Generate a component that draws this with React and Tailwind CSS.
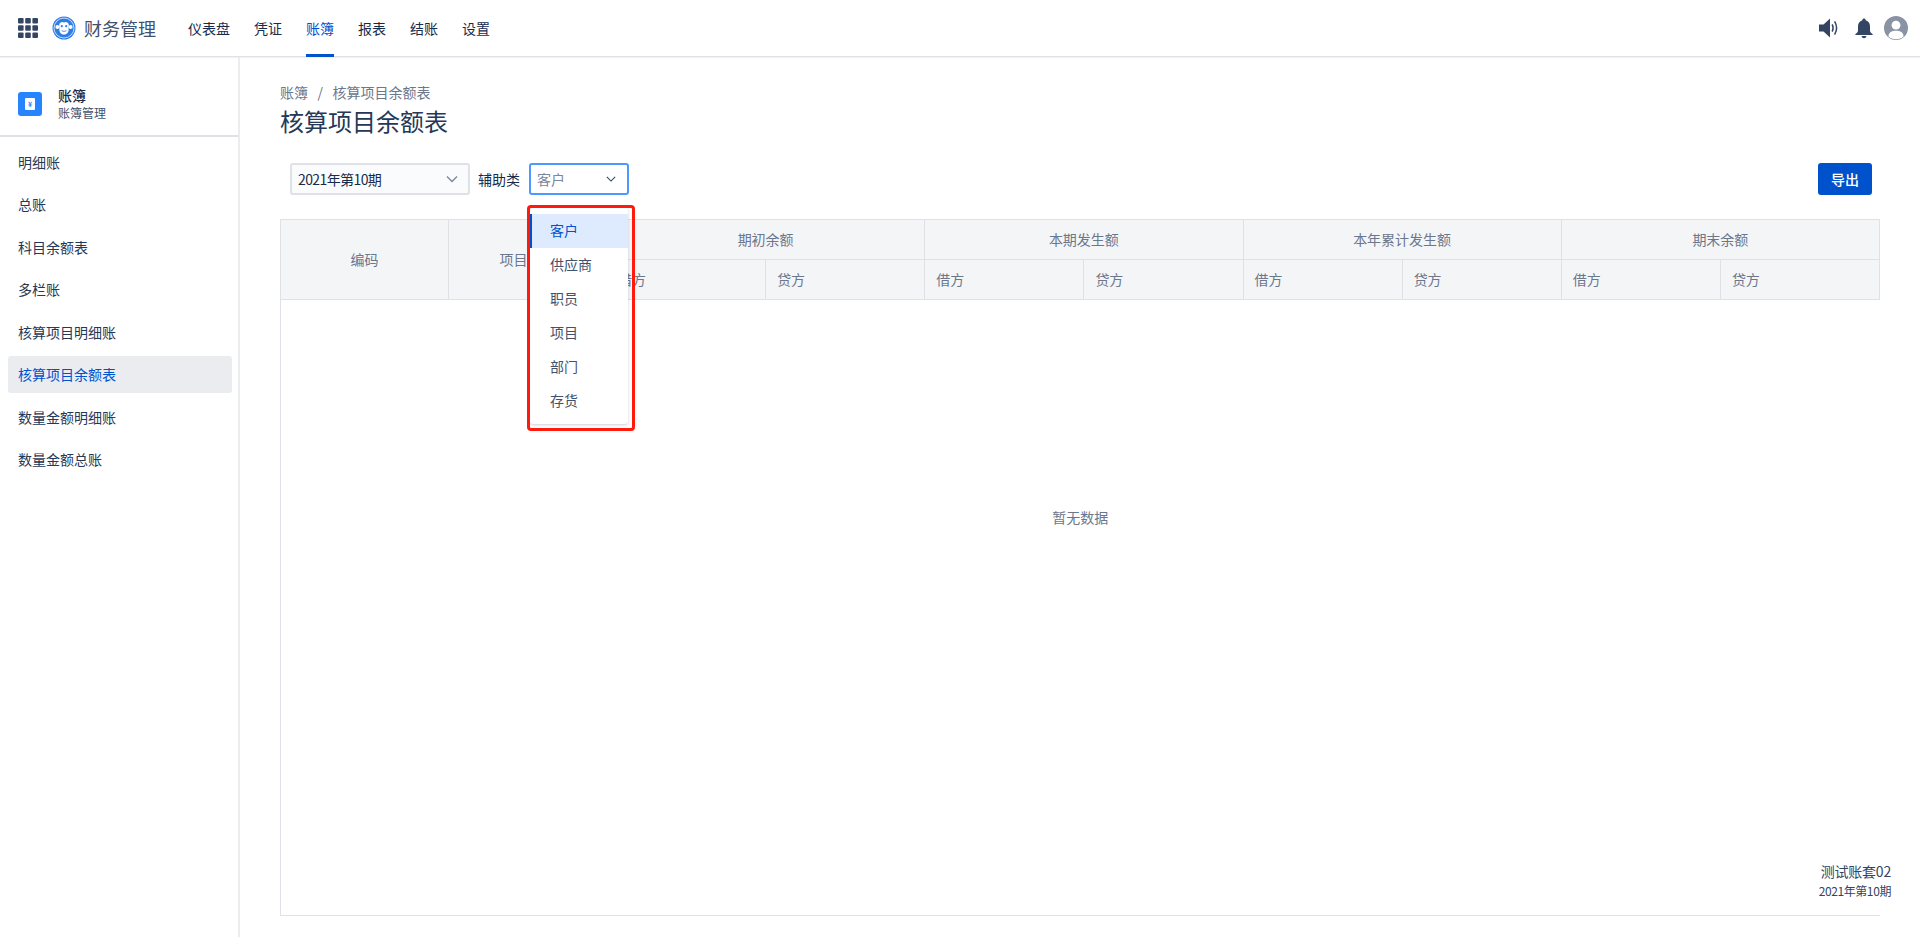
const NAV = ['仪表盘', '凭证', '账簿', '报表', '结账', '设置']
const SIDE = ['明细账', '总账', '科目余额表', '多栏账', '核算项目明细账', '核算项目余额表', '数量金额明细账', '数量金额总账']
const OPTIONS = ['客户', '供应商', '职员', '项目', '部门', '存货']
const GROUPS = ['期初余额', '本期发生额', '本年累计发生额', '期末余额']

function Chevron({ className }) {
  return (
    <svg viewBox="0 0 12 12" className={className} fill="none" stroke="currentColor" strokeWidth="1.3">
      <path d="M1 3.5 L6 8.5 L11 3.5" />
    </svg>
  )
}

function Logo() {
  return (
    <svg viewBox="0 0 24 24" className="w-[24px] h-[24px] shrink-0">
      <circle cx="12" cy="12" r="11.5" fill="#2f80e8" />
      <circle cx="12" cy="12" r="10" fill="none" stroke="#ffffff" strokeWidth="0.7" />
      <circle cx="12" cy="12" r="8.6" fill="#2f7de1" />
      <circle cx="5.4" cy="11" r="2" fill="#ffffff" />
      <circle cx="18.6" cy="11" r="2" fill="#ffffff" />
      <path d="M12 6.6 C13 5.6 16.6 5.8 16.8 9 C17 11 16.4 11.6 16.6 13 C17 16.6 14.4 18.6 12 18.6 C9.6 18.6 7 16.6 7.4 13 C7.6 11.6 7 11 7.2 9 C7.4 5.8 11 5.6 12 6.6 Z" fill="#ffffff" />
      <circle cx="9.8" cy="10.2" r="1.1" fill="#2f7de1" />
      <circle cx="14.2" cy="10.2" r="1.1" fill="#2f7de1" />
      <path d="M9.5 14.6 Q12 16.4 14.5 14.6" fill="none" stroke="#2f7de1" strokeWidth="0.8" />
    </svg>
  )
}

function Grid() {
  return (
    <svg viewBox="0 0 20 20" className="w-[20px] h-[20px]" fill="#344563">
      {[0, 7.2, 14.4].map(y => [0, 7.2, 14.4].map(x => (
        <rect key={`${x}-${y}`} x={x} y={y} width="5.6" height="5.6" rx="1" />
      )))}
    </svg>
  )
}

function Speaker() {
  return (
    <svg viewBox="0 0 20 20" className="w-[20px] h-[20px]">
      <path d="M0 6.5 H4.5 L11 0.5 V19.5 L4.5 13.5 H0 Z" fill="#344563" />
      <path d="M13.2 6.4 Q15 10 13.2 13.6" fill="none" stroke="#344563" strokeWidth="1.5" />
      <path d="M15.6 3.4 Q19.6 10 15.6 16.6" fill="none" stroke="#344563" strokeWidth="1.5" />
    </svg>
  )
}

function Bell() {
  return (
    <svg viewBox="0 0 24 24" className="w-[24px] h-[24px]" fill="#344563">
      <path d="M12 2.5 C13 2.5 13.6 3.2 13.6 4.2 C16.6 5 18 7.4 18 10.4 V14.4 C18 16 19 17 20.6 18 V19 H3.4 V18 C5 17 6 16 6 14.4 V10.4 C6 7.4 7.4 5 10.4 4.2 C10.4 3.2 11 2.5 12 2.5 Z" />
      <path d="M9.6 20 H14.4 C14.4 21.4 13.4 22.2 12 22.2 C10.6 22.2 9.6 21.4 9.6 20 Z" />
    </svg>
  )
}

function Avatar() {
  return (
    <svg viewBox="0 0 24 24" className="w-[24px] h-[24px]">
      <circle cx="12" cy="12" r="12" fill="#8993a4" />
      <circle cx="12" cy="9.2" r="4.4" fill="#ffffff" />
      <path d="M4.4 20.2 C4.8 16.4 7.6 14.8 12 14.8 C16.4 14.8 19.2 16.4 19.6 20.2 C17.6 22.4 15 23.2 12 23.2 C9 23.2 6.4 22.4 4.4 20.2 Z" fill="#ffffff" />
    </svg>
  )
}

function BookIcon() {
  return (
    <div className="w-[24px] h-[24px] rounded-[3px] bg-[#2684ff] flex items-center justify-center shrink-0">
      <div className="w-[10px] h-[12px] rounded-[1px] bg-white flex items-center justify-center text-[7px] leading-none font-bold text-[#2684ff]">¥</div>
    </div>
  )
}

export default function App() {
  return (
    <div className="h-[937px] flex flex-col overflow-hidden bg-white text-[#172b4d] text-[14px] font-['Noto_Sans_CJK_SC','Noto_Sans',sans-serif]">
      <header className="h-[57px] shrink-0 flex items-center border-b border-[#dfe1e6] shadow-[0_1px_1px_rgba(9,30,66,0.06)]">
        <div className="ml-[18px]"><Grid /></div>
        <div className="ml-[14px]"><Logo /></div>
        <span className="ml-[8px] text-[18px] text-[#42526e] leading-none">财务管理</span>
        <nav className="ml-[32px] flex gap-[24px] self-stretch">
          {NAV.map(n => (
            <a key={n} className={n === '账簿'
              ? 'h-[57px] flex items-center text-[#0052cc] border-b-[3px] border-[#0052cc] pt-[2px]'
              : 'h-[57px] flex items-center text-[#172b4d] border-b-[3px] border-transparent pt-[2px]'}>{n}</a>
          ))}
        </nav>
        <div className="ml-auto mr-[12px] flex items-center">
          <Speaker />
          <div className="ml-[13px]"><Bell /></div>
          <div className="ml-[8px]"><Avatar /></div>
        </div>
      </header>

      <div className="flex-1 flex min-h-0">
        <aside className="w-[240px] shrink-0 border-r-2 border-[#ebecf0]">
          <div className="h-[80px] border-b-2 border-[#dfe1e6] flex items-center pl-[18px] pt-[16px]">
            <BookIcon />
            <div className="ml-[16px]">
              <div className="font-medium text-[14px] leading-[18px] text-[#172b4d]">账簿</div>
              <div className="text-[12px] leading-[18px] text-[#42526e]">账簿管理</div>
            </div>
          </div>
          <ul className="pl-[8px] pr-[6px] pt-[6px] flex flex-col gap-[5.5px]">
            {SIDE.map(s => (
              <li key={s} className={s === '核算项目余额表'
                ? 'h-[37px] rounded-[3px] pl-[10px] pt-[1px] flex items-center bg-[#ebecf0] text-[#0052cc]'
                : 'h-[37px] rounded-[3px] pl-[10px] pt-[1px] flex items-center text-[#253858]'}>{s}</li>
            ))}
          </ul>
        </aside>

        <main className="relative flex-1 min-w-0 pl-[40px] pr-[40px]">
          <div className="pt-[26px] flex items-center leading-[18px] text-[#6b778c]">
            <span>账簿</span>
            <span className="mx-[9.5px]">/</span>
            <span>核算项目余额表</span>
          </div>
          <h1 className="mt-[4px] text-[24px] leading-[32px] font-normal text-[#253858]">核算项目余额表</h1>

          <div className="mt-[26px] ml-[10px] flex items-center h-[32px]">
            <div className="w-[180px] h-[32px] rounded-[3px] border-2 border-[#dfe1e6] bg-[#fafbfc] flex items-center pl-[6px] pr-[10px]">
              <span className="flex-1 tracking-[-0.6px]">2021年第10期</span>
              <Chevron className="w-[12px] h-[12px] text-[#7a869a]" />
            </div>
            <span className="ml-[8px] text-[#172b4d]">辅助类</span>
            <div className="ml-[9px] w-[100px] h-[32px] rounded-[3px] border-2 border-[#4c9aff] bg-white flex items-center pl-[6px] pr-[11px]">
              <span className="flex-1 text-[#7a869a]">客户</span>
              <Chevron className="w-[10px] h-[10px] text-[#344563]" />
            </div>
            <button className="ml-auto mr-[8px] w-[54px] h-[32px] rounded-[3px] bg-[#0052cc] text-white font-medium">导出</button>
          </div>

          <table className="mt-[24px] w-[1600px] table-fixed border-collapse text-[#6b778c]">
            <colgroup>
              <col className="w-[168px]" />
              <col className="w-[158px]" />
              {Array.from({ length: 8 }).map((_, i) => <col key={i} />)}
            </colgroup>
            <thead className="bg-[#f4f5f7]">
              <tr className="h-[40px]">
                <th rowSpan="2" className="border border-[#dfe1e6] font-normal text-center">编码</th>
                <th rowSpan="2" className="border border-[#dfe1e6] font-normal text-center">项目名称</th>
                {GROUPS.map(g => (
                  <th key={g} colSpan="2" className="border border-[#dfe1e6] font-normal text-center">{g}</th>
                ))}
              </tr>
              <tr className="h-[40px]">
                {GROUPS.map(g => ['借方', '贷方'].map(d => (
                  <th key={g + d} className="border border-[#dfe1e6] font-normal text-left pl-[11px]">{d}</th>
                )))}
              </tr>
            </thead>
            <tbody>
              <tr className="h-[616px]">
                <td colSpan="10" className="border-l border-b border-[#dfe1e6] text-center align-top pt-[207px]">暂无数据</td>
              </tr>
            </tbody>
          </table>

          {/* 下拉菜单浮在表格上面 */}
          <div className="absolute left-[290px] top-[151px] w-[98px] py-[6px] bg-white rounded-[3px] shadow-[0_1px_3px_rgba(9,30,66,0.22)] text-[#42526e]">
            {OPTIONS.map(o => (
              <div key={o} className={o === '客户'
                ? 'h-[34px] pl-[18px] pb-[1px] flex items-center bg-[#deebff] text-[#0052cc] border-l-2 border-[#0052cc]'
                : 'h-[34px] pl-[20px] pb-[1px] flex items-center'}>{o}</div>
            ))}
          </div>
          <div className="absolute left-[287px] top-[148px] w-[108px] h-[226px] rounded-[4px] border-[3px] border-[#ff1a0e] pointer-events-none" />

          <div className="absolute right-[29px] top-[804px] text-right text-[#344563]">
            <div className="text-[14px] leading-[20px] tracking-[-0.2px]">测试账套02</div>
            <div className="text-[12px] leading-[19px] tracking-[-0.4px]">2021年第10期</div>
          </div>
        </main>
      </div>
    </div>
  )
}
